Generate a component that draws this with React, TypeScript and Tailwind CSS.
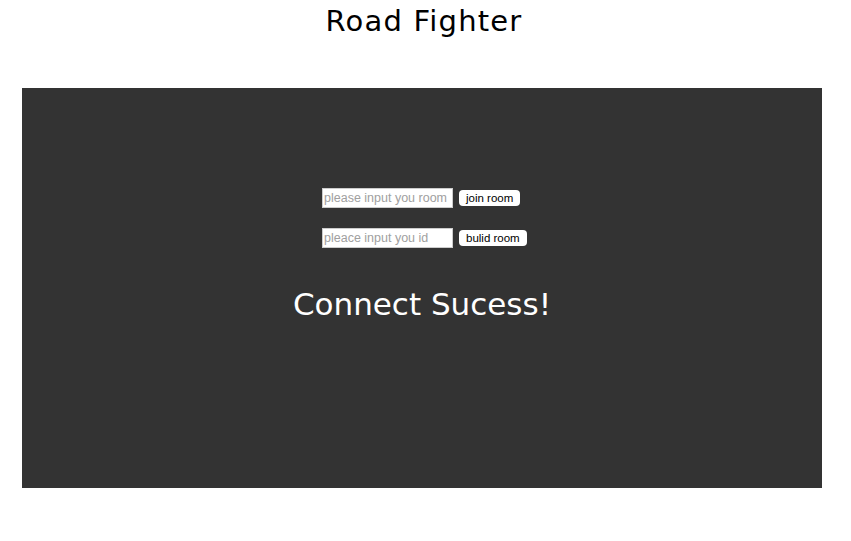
const inputCls =
  "h-[20px] w-[131px] border border-[#cccccc] bg-white px-[1px] text-[12.5px] font-['Liberation_Sans',sans-serif] placeholder:text-[#a0a0a0] outline-none";
const btnCls =
  "h-[16px] rounded-[4px] bg-white px-[7px] text-[11.5px] leading-[16px] text-black font-['Liberation_Sans',sans-serif]";

export default function App() {
  return (
    <div className="w-[851px] h-[541px] bg-white font-['DejaVu_Sans',sans-serif]">
      <h1 className="h-[44px] pt-[3px] pr-[3px] text-center text-[29px] leading-[36px] tracking-[1.2px] text-black">Road Fighter</h1>
      <div className="mx-[22px] mt-[44px] h-[400px] w-[800px] bg-[#333333] pt-[100px]">
        <div className="ml-[300px] flex flex-col items-start gap-[20px]">
          <div className="flex items-center gap-[6px]">
            <input placeholder="please input you room" className={inputCls} />
            <button className={btnCls}>join room</button>
          </div>
          <div className="flex items-center gap-[6px]">
            <input placeholder="pleace input you id" className={inputCls} />
            <button className={btnCls}>bulid room</button>
          </div>
        </div>
        <p className="mt-[36px] text-center text-[31px] leading-[40px] text-white">Connect Sucess!</p>
      </div>
    </div>
  );
}
